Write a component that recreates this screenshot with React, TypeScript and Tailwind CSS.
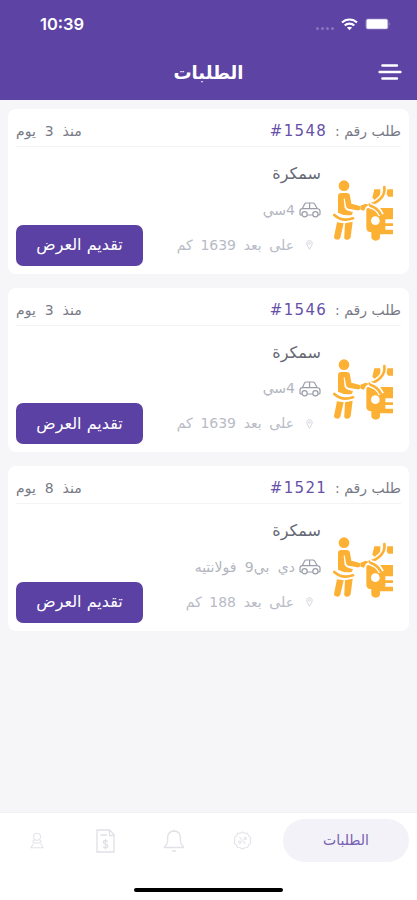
import type { ReactNode } from "react";

type Order = {
  id: string;
  age: string;
  service: string;
  car: string;
  distance: string;
};

const orders: Order[] = [
  { id: "1548", age: "منذ 3 يوم", service: "سمكرة", car: "4سي", distance: "على بعد 1639 كم" },
  { id: "1546", age: "منذ 3 يوم", service: "سمكرة", car: "4سي", distance: "على بعد 1639 كم" },
  { id: "1521", age: "منذ 8 يوم", service: "سمكرة", car: "دي بي9 فولانتيه", distance: "على بعد 188 كم" },
];

function WifiIcon() {
  return (
    <svg className="h-[13px] w-[17px]" viewBox="0 0 17 13" fill="none" stroke="white" strokeWidth="2.1">
      <path d="M1 4.6 C5 0.5 12 0.5 16 4.6" />
      <path d="M3.7 7.6 C6.3 5 10.7 5 13.3 7.6" />
      <path d="M8.5 12.2 L5.9 9.6 C7.3 8.3 9.7 8.3 11.1 9.6 Z" fill="white" stroke="none" />
    </svg>
  );
}

function BatteryIcon() {
  return (
    <svg className="h-3 w-[26px]" viewBox="0 0 26 12">
      <rect x="0.5" y="0.5" width="23" height="11" rx="2.5" fill="#8b79bf" />
      <rect x="1.5" y="1.2" width="21" height="9.6" rx="1.5" fill="white" />
      <path d="M24.5 4 Q26 6 24.5 8 Z" fill="#a99bd0" />
    </svg>
  );
}

function MenuIcon() {
  return (
    <svg className="h-[18px] w-[24px]" viewBox="0 0 24 18" stroke="white" strokeWidth="2.4" strokeLinecap="round">
      <path d="M4.4 2.5 H19 M1.6 9 H22.4 M4.4 15.5 H19" />
    </svg>
  );
}

function MechanicIcon() {
  return (
    <svg className="h-[62px] w-[62px]" viewBox="24 24 186 186" fill="#fcb034">
      {/* worker */}
      <circle cx="57" cy="44" r="16" />
      <path d="M39 76 Q39 66 49 66 H65 Q74 66 75 75 L79 98 L102 104 Q109 107 106 115 Q103 119 97 118 L70 113 Q64 111 63 104 L59 82 L56 83 L59 111 Q63 119 72 120 L84 124 L80 132 Q60 136 39 125 Z" />
      <path d="M28 132 Q50 153 84 142" fill="none" stroke="#fcb034" strokeWidth="8" strokeLinecap="round" />
      <path d="M36 154 L56 157 L46 200 Q42 209 32 205 Q25 202 28 193 Z" />
      <path d="M60 157 L83 152 L77 199 Q74 208 64 206 Q56 204 58 195 Z" />
      <path d="M106 104 L122 98 L131 101 L122 109 L117 119 L107 116 Z" />
      {/* car front with the hood up */}
      <path d="M128 111 H204 V145 H181 V157 H204 V165 H181 V176 H204 V190 H165 V199 Q164 209 152 209 Q140 208 139 199 V184 Q124 183 124 170 V119 Q124 111 128 111 Z" />
      <path d="M148 55 H166 V76 L152 90 L142 80 Z" />
      <path d="M183 55 H204 V77 H190 L182 66 Z" />
      <path d="M178 48 C182 74 162 94 134 101" fill="none" stroke="white" strokeWidth="17" />
      <path d="M178 48 C182 74 162 94 134 101" fill="none" stroke="#fcb034" strokeWidth="8" strokeLinecap="round" />
      <path d="M134 104 Q158 108 169 132" fill="none" stroke="white" strokeWidth="17" />
      <path d="M136 104 Q157 110 167 130" fill="none" stroke="#fcb034" strokeWidth="8" strokeLinecap="round" />
      <circle cx="151" cy="149" r="13" fill="white" />
    </svg>
  );
}

function CarIcon() {
  return (
    <svg className="h-4 w-[22px]" viewBox="0 0 22 16" fill="none" stroke="#9a9da9" strokeWidth="1.2" strokeLinejoin="round">
      <path d="M3 13 H2 Q1 13 1 12 V9 Q1 7 3.4 6.6 L5.6 2 Q6 1 7.2 1 H13.8 Q15 1 15.6 2 L18.2 6.5 Q21 7 21 9 V12 Q21 13 20 13 H19 M8.2 13 H13.8 M3.4 6.6 H18.2 M10.6 1 V6.6" />
      <circle cx="5.6" cy="12.3" r="2.6" />
      <circle cx="16.4" cy="12.3" r="2.6" />
    </svg>
  );
}

function PinIcon() {
  return (
    <svg className="h-[10px] w-[7px]" viewBox="0 0 7 10" fill="none" stroke="#cfd2da" strokeWidth="0.9">
      <path d="M3.5 9.3 L1.2 5.2 Q0 2.5 1.8 1.2 Q3.5 0 5.2 1.2 Q7 2.5 5.8 5.2 Z" />
      <circle cx="3.5" cy="3.4" r="0.9" />
    </svg>
  );
}

function OffersIcon() {
  return (
    <svg className="h-[19px] w-[19px]" viewBox="0 0 19 19" fill="none" stroke="#e3e4e9" strokeWidth="1.1">
      <path d="M9.5 1 L11.8 2.3 L14.5 2.4 L15.6 4.9 L17.7 6.7 L17.2 9.5 L17.7 12.2 L15.6 14.1 L14.5 16.5 L11.8 16.7 L9.5 18 L7.2 16.7 L4.5 16.5 L3.4 14.1 L1.3 12.2 L1.8 9.5 L1.3 6.7 L3.4 4.9 L4.5 2.4 L7.2 2.3 Z" />
      <path d="M6.5 6 L12.5 13" />
      <circle cx="6.8" cy="11.3" r="1.2" />
      <circle cx="12.2" cy="7.5" r="1.2" />
    </svg>
  );
}

function BellIcon() {
  return (
    <svg className="h-6 w-[22px]" viewBox="0 0 22 24" fill="none" stroke="#e0e2e8" strokeWidth="1.3" strokeLinejoin="round">
      <path d="M11 0.5 V2 M11 2 Q4.8 2.3 4.6 9 V12.5 Q4.4 15.5 1.5 17.5 V18.5 H20.5 V17.5 Q17.6 15.5 17.4 12.5 V9 Q17.2 2.3 11 2 Z M8.8 22 H13.2" />
    </svg>
  );
}

function InvoiceIcon() {
  return (
    <svg className="h-6 w-[19px]" viewBox="0 0 19 24" fill="none" stroke="#dfe1e7" strokeWidth="1.3">
      <path d="M1 1 H13.5 L18 5.5 V23 H1 Z M13.5 1 V6.5 H18 M4.5 6 H11" />
      <path d="M11.7 12.7 Q11 11.5 9.5 11.5 Q7.4 11.5 7.4 13.3 Q7.4 14.6 9.5 15 Q11.8 15.4 11.8 17 Q11.8 18.8 9.5 18.8 Q7.8 18.8 7.2 17.5 M9.5 10 V20.4" />
    </svg>
  );
}

function UserIcon() {
  return (
    <svg className="h-[17px] w-[14px]" viewBox="0 0 14 17" fill="none" stroke="#e3e4e9" strokeWidth="1.1">
      <circle cx="7" cy="4.7" r="3.5" />
      <path d="M4.5 8 Q2 9 3.5 11 H10.5 Q12 9 9.5 8 M3 12 L1 15.7 H13 L11 12" />
    </svg>
  );
}

function OrderCard({ order }: { order: Order }) {
  return (
    <article className="h-[164.5px] rounded-lg bg-white px-2 pt-2">
      <div className="flex h-[30px] items-center justify-between border-b border-[#f3f3f6] text-[14px] whitespace-nowrap text-[#777a86]">
        <div className="flex items-center gap-2">
          <span>طلب رقم :</span>
          <span dir="ltr" className="text-[15px] tracking-[1.3px] text-[#6650a8]">
            #{order.id}
          </span>
        </div>
        <span className="[word-spacing:4.5px]">{order.age}</span>
      </div>

      <div className="flex">
        <div className="mt-[32px] mr-[6px]">
          <MechanicIcon />
        </div>
        <div className="mr-3 flex grow flex-col whitespace-nowrap">
          <h2 className="mt-[12px] h-[30px] text-[16px] leading-[30px] text-[#666975]">{order.service}</h2>
          <div className="mt-[8px] flex h-[26px] items-center gap-1 text-[14px] text-[#b2b5c0] [word-spacing:4px]">
            <CarIcon />
            <span>{order.car}</span>
          </div>
          <div className="mt-[2px] flex h-[40px] items-center justify-between">
            <div className="mr-2 flex items-center gap-3 text-[14px] text-[#b8bbc6] [word-spacing:3.2px]">
              <PinIcon />
              <span>{order.distance}</span>
            </div>
            <button className="h-[41px] w-[127px] rounded-[7px] bg-[#5b41a3] text-[16px] text-white">
              تقديم العرض
            </button>
          </div>
        </div>
      </div>
    </article>
  );
}

function NavItem({ children }: { children: ReactNode }) {
  return <button className="flex h-[42px] w-[68.5px] items-center justify-center">{children}</button>;
}

export default function App() {
  return (
    <div
      dir="rtl"
      className="flex h-[900px] w-[417px] flex-col overflow-hidden bg-[#f6f6f9] font-['DejaVu_Sans',sans-serif]"
    >
      <header className="h-[100px] bg-[#5d43a4] text-white">
        <div dir="ltr" className="flex h-[48px] items-center justify-between pr-[26px] pl-[40px]">
          <span className="font-['Inter',sans-serif] text-[16.5px] font-semibold">10:39</span>
          <div className="flex items-center gap-[7px]">
            <div className="mt-[8px] flex gap-[2px]">
              {[0, 1, 2, 3].map((dot) => (
                <span key={dot} className="size-[3px] rounded-full bg-[#8875bf]" />
              ))}
            </div>
            <WifiIcon />
            <BatteryIcon />
          </div>
        </div>
        <div className="grid h-[48px] grid-cols-[40px_1fr_40px] items-center">
          <button className="mr-[15px]">
            <MenuIcon />
          </button>
          <h1 className="text-center text-[18px] font-bold">الطلبات</h1>
        </div>
      </header>

      <main className="flex grow flex-col gap-[14px] px-2 pt-[9px]">
        {orders.map((order) => (
          <OrderCard key={order.id} order={order} />
        ))}
      </main>

      <footer className="flex h-[88px] flex-col justify-between border-t border-[#f1f1f4] bg-white pt-[6px] pb-2">
        <nav className="flex items-center pr-2">
          <button className="h-[43px] w-[126px] rounded-full bg-[#f3f2f8] text-[14px] text-[#775fb0]">الطلبات</button>
          <div className="mr-[6px] flex">
            <NavItem>
              <OffersIcon />
            </NavItem>
            <NavItem>
              <BellIcon />
            </NavItem>
            <NavItem>
              <InvoiceIcon />
            </NavItem>
            <NavItem>
              <UserIcon />
            </NavItem>
          </div>
        </nav>
        <div className="h-[4px] w-[149px] self-center rounded-full bg-black" />
      </footer>
    </div>
  );
}
